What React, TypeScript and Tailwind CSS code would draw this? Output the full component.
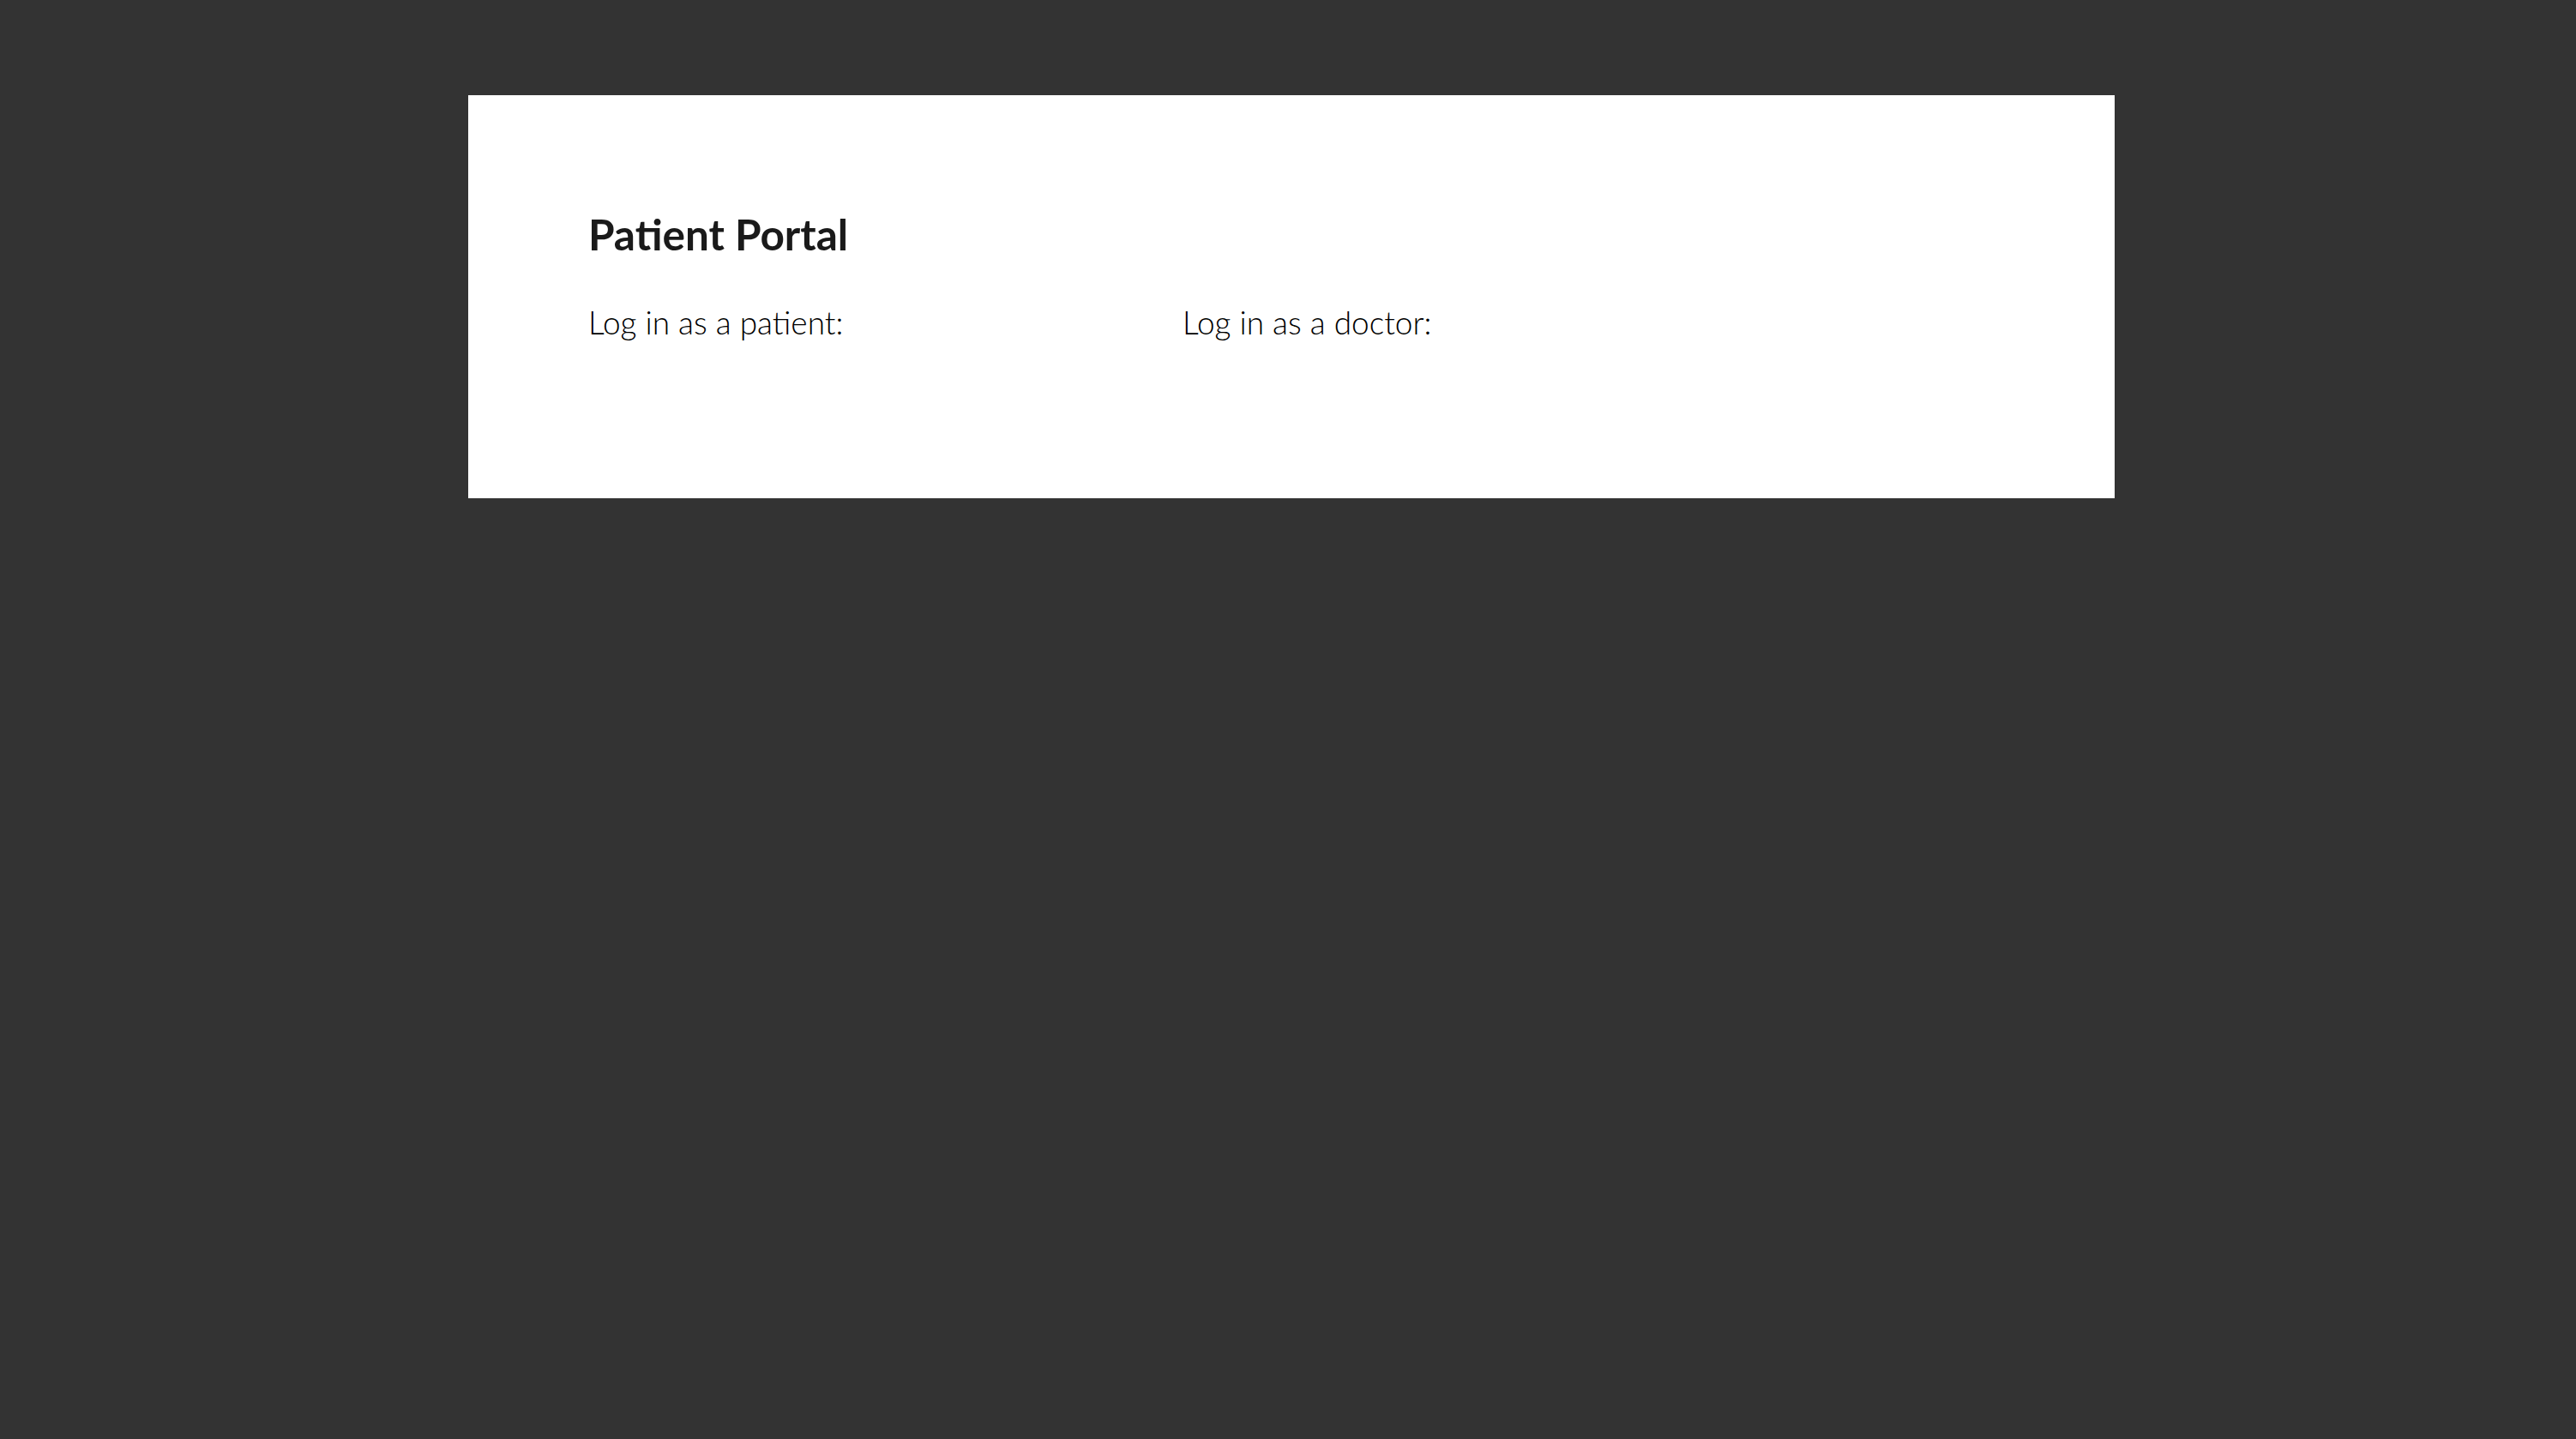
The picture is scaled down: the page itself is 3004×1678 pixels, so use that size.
import React from 'react';

const App = () => {
    return (
        <div className="min-h-screen w-full bg-[#333333] pt-[111px] pl-[546px]" style={{ fontFamily: 'Lato, "Open Sans", sans-serif' }}>
            <div className="w-[1920px] h-[470px] bg-white pl-[140px] pr-[120px] pt-[132px]">
                <h1 className="text-[49.5px] leading-[60px] font-bold text-[#1a1a1a]">Patient Portal</h1>
                <div className="flex mt-[50px]">
                    <div className="w-[693px]">
                        <p className="text-[37px] leading-[46px] font-light text-black">Log in as a patient:</p>
                    </div>
                    <div className="flex-1">
                        <p className="text-[37px] leading-[46px] font-light text-black">Log in as a doctor:</p>
                    </div>
                </div>
            </div>
        </div>
    );
};

export default App;
